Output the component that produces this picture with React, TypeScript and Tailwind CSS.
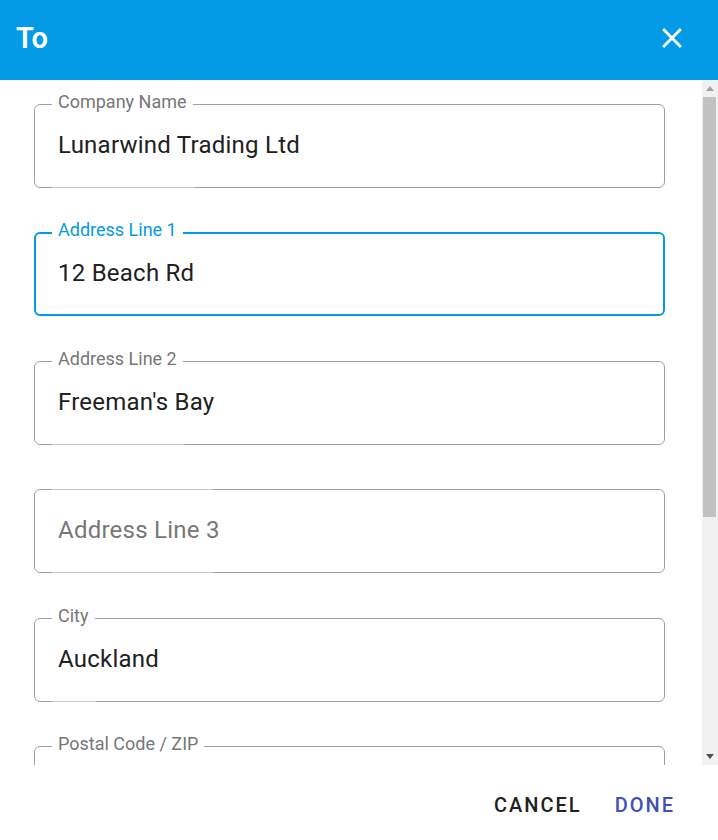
import { useState } from "react";

type Field = {
    label: string;
    value: string;
    light: string; // width class of the faint notch segment on the border
    lightTop?: boolean;
    showLabel?: boolean;
};

const fields: Field[] = [
    { label: "Company Name", value: "Lunarwind Trading Ltd", light: "w-[143px]" },
    { label: "Address Line 1", value: "12 Beach Rd", light: "w-[143px]" },
    { label: "Address Line 2", value: "Freeman's Bay", light: "w-[133px]" },
    { label: "Address Line 3", value: "", light: "w-[161px]", lightTop: true },
    { label: "City", value: "Auckland", light: "w-[44px]" },
    { label: "Postal Code / ZIP", value: "", light: "w-[160px]", showLabel: true },
];

function OutlinedField({ f, focused, onFocus }: { f: Field; focused: boolean; onFocus: () => void }) {
    const [val, setVal] = useState(f.value);
    const floated = focused || val !== "" || f.showLabel;

    return (
        <div
            className={`relative h-[84px] shrink-0 rounded-[6px] ${
                focused ? "border-2 border-[#039be5]" : "border border-[#a0a0a0]"
            }`}
        >
            {floated && (
                <span
                    className={`absolute bg-white px-[6px] text-[18px] leading-[20px] ${
                        focused ? "-top-[14px] left-[16px] text-[#039be5]" : "-top-[13px] left-[17px] text-[#777777]"
                    }`}
                >
                    {f.label}
                </span>
            )}
            {!focused && (
                <span className={`absolute -bottom-px left-[17px] h-px bg-[#c9c9c9] ${f.light}`} />
            )}
            {!focused && f.lightTop && !floated && (
                <span className={`absolute -top-px left-[17px] h-px bg-[#c9c9c9] ${f.light}`} />
            )}
            <input
                value={val}
                onChange={(e) => setVal(e.target.value)}
                onFocus={onFocus}
                placeholder={floated ? "" : f.label}
                className={`h-full w-full bg-transparent pb-[2px] text-[24px] tracking-[0.01em] text-[#212121] outline-none placeholder:text-[#777777] ${
                    focused ? "pl-[22px]" : "pl-[23px]"
                }`}
            />
        </div>
    );
}

export default function App() {
    const [focus, setFocus] = useState(1);

    return (
        <div className="flex h-[840px] w-[718px] flex-col bg-white font-['Roboto',sans-serif]">
            <header className="flex h-[80px] shrink-0 items-center justify-between bg-[#039be5] pb-[4px] pl-4 pr-[29px]">
                <h2 className="text-[29px] font-semibold leading-none text-white">To</h2>
                <button className="flex text-white" aria-label="Close">
                    <svg width="34" height="34" viewBox="0 0 24 24" fill="currentColor">
                        <path d="M19 6.41L17.59 5 12 10.59 6.41 5 5 6.41 10.59 12 5 17.59 6.41 19 12 13.41 17.59 19 19 17.59 13.41 12z" />
                    </svg>
                </button>
            </header>

            <div className="flex h-[685px] shrink-0">
                <div className="flex flex-1 flex-col gap-[44.4px] overflow-hidden pl-[34px] pr-[37px] pt-[24px]">
                    {fields.map((f, i) => (
                        <OutlinedField key={f.label} f={f} focused={focus === i} onFocus={() => setFocus(i)} />
                    ))}
                </div>

                {/* scrollbar */}
                <div className="flex w-[16px] flex-col bg-[#f1f1f1]">
                    <div className="flex h-[17px] items-center justify-center">
                        <svg width="8" height="5" viewBox="0 0 8 5"><path d="M4 0L8 5H0z" fill="#a3a3a3" /></svg>
                    </div>
                    <div className="flex-1">
                        <div className="ml-px h-[420px] w-[13px] bg-[#c1c1c1]" />
                    </div>
                    <div className="flex h-[17px] items-center justify-center">
                        <svg width="8" height="5" viewBox="0 0 8 5"><path d="M0 0H8L4 5z" fill="#505050" /></svg>
                    </div>
                </div>
            </div>

            <footer className="flex flex-1 items-center justify-end gap-[33px] pr-[43px] pt-[4px]">
                <button className="text-[20px] font-medium uppercase tracking-[0.1em] text-[#212121]">Cancel</button>
                <button className="text-[20px] font-medium uppercase tracking-[0.1em] text-[#3f51b5]">Done</button>
            </footer>
        </div>
    );
}
